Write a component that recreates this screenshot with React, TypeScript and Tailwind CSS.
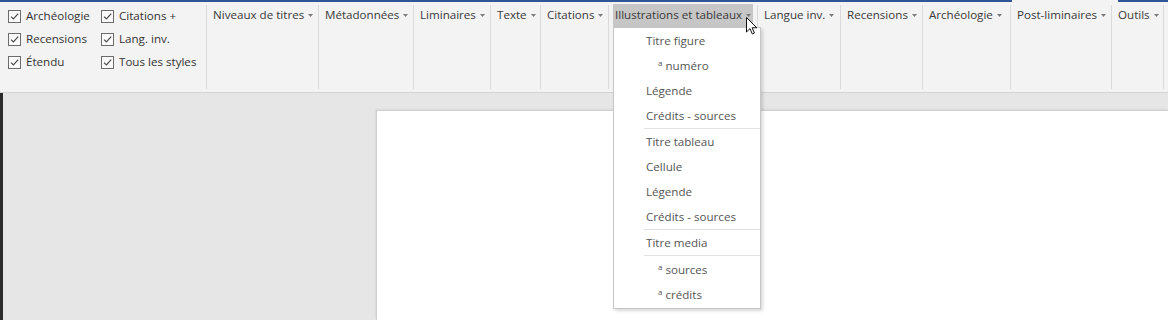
import type { ReactNode } from "react";

const font = "font-['Open_Sans','Noto_Sans',sans-serif]";

type Group = { label: string; w: string; open?: boolean };

const groups: Group[] = [
  { label: "Niveaux de titres", w: "w-[112px]" },
  { label: "Métadonnées", w: "w-[95px]" },
  { label: "Liminaires", w: "w-[77px]" },
  { label: "Texte", w: "w-[50px]" },
  { label: "Citations", w: "w-[68px]" },
  { label: "Illustrations et tableaux", w: "w-[149px]", open: true },
  { label: "Langue inv.", w: "w-[83px]" },
  { label: "Recensions", w: "w-[82px]" },
  { label: "Archéologie", w: "w-[88px]" },
  { label: "Post-liminaires", w: "w-[101px]" },
  { label: "Outils", w: "w-[52px]" },
];

const checks = [
  ["Archéologie", "Citations +"],
  ["Recensions", "Lang. inv."],
  ["Étendu", "Tous les styles"],
];

function Caret() {
  return (
    <svg width="5" height="3" viewBox="0 0 5 3" className="ml-[4px] mt-[2px] shrink-0">
      <polygon points="0,0 5,0 2.5,3" fill="#7a7a7a" />
    </svg>
  );
}

function Check({ label }: { label: string }) {
  return (
    <div className="flex h-[23px] items-center gap-[5px] whitespace-nowrap pb-[1px]">
      <span className="flex h-[13px] w-[13px] shrink-0 items-center justify-center border border-[#6b6b6b] bg-[#fbfbfb]">
        <svg width="11" height="11" viewBox="0 0 11 11">
          <path d="M2 5.6 L4.4 8 L9.2 2.6" fill="none" stroke="#4a4a4a" strokeWidth="1.2" />
        </svg>
      </span>
      <span className="text-[11.6px] text-[#333]">{label}</span>
    </div>
  );
}

function Item({ children, sub }: { children: ReactNode; sub?: boolean }) {
  return (
    <div
      className={`flex h-[25px] items-center whitespace-nowrap text-[11.6px] text-[#555] ${
        sub ? "pl-[44px]" : "pl-[32px]"
      }`}
    >
      {sub && <span className="mr-[3px] -mt-[5px] text-[8px]">a</span>}
      {children}
    </div>
  );
}

function Sep() {
  return <div className="ml-[30px] h-px bg-[#e2e2e2]" />;
}

export default function App() {
  return (
    <div className={`relative h-[320px] w-[1168px] overflow-hidden bg-[#e6e6e6] ${font}`}>
      <div className="flex h-[2px]">
        <div className="w-[1012px] bg-[#2f5597]" />
        <div className="w-[106px] bg-[#f3f3f3]" />
        <div className="flex-1 bg-[#2f5597]" />
      </div>

      <div className="flex h-[91px] border-b border-[#d4d4d4] bg-[#f3f3f3] py-[3px]">
        <div className="flex w-[207px] shrink-0 gap-[13px] border-r border-[#dadada] pl-[8px]">
          <div className="flex w-[80px] flex-col">
            {checks.map((r) => (
              <Check key={r[0]} label={r[0]} />
            ))}
          </div>
          <div className="flex flex-col">
            {checks.map((r) => (
              <Check key={r[1]} label={r[1]} />
            ))}
          </div>
        </div>
        {groups.map((g) => (
          <div key={g.label} className={`${g.w} flex shrink-0 items-start border-r border-[#dadada] pl-[4px]`}>
            <div
              className={`flex h-[23px] -mt-[1px] items-center whitespace-nowrap px-[2px] pb-[2px] text-[11.6px] text-[#3a3a3a] ${
                g.open ? "bg-[#c6c6c6]" : ""
              }`}
            >
              {g.label}
              <Caret />
            </div>
          </div>
        ))}
        <div className="flex-1" />
      </div>

      <div className="flex h-[227px]">
        <div className="w-[3px] bg-[#2b2b2b]" />
        <div className="flex-1 pl-[373px] pt-[17px]">
          <div className="h-full border-l border-t border-[#cfcfcf] bg-white shadow-[-1px_-1px_2px_rgba(0,0,0,0.06)]" />
        </div>
      </div>

      <div className="absolute left-[613px] top-[27px] w-[148px] border border-[#c6c6c6] bg-white pb-[1px] shadow-[2px_2px_3px_rgba(0,0,0,0.15)]">
        <Item>Titre figure</Item>
        <Item sub>numéro</Item>
        <Item>Légende</Item>
        <Item>Crédits - sources</Item>
        <Sep />
        <Item>Titre tableau</Item>
        <Item>Cellule</Item>
        <Item>Légende</Item>
        <Item>Crédits - sources</Item>
        <Sep />
        <Item>Titre media</Item>
        <Sep />
        <div className="pt-[1px]">
          <Item sub>sources</Item>
          <Item sub>crédits</Item>
        </div>
      </div>

      <svg className="absolute left-[746px] top-[17px]" width="12" height="19" viewBox="0 0 12 19">
        <path
          d="M0.5 0.5 L0.5 15 L4 11.6 L6.3 17 L8.4 16.1 L6.1 10.8 L10.8 10.8 Z"
          fill="#fff"
          stroke="#111"
          strokeWidth="1"
          strokeLinejoin="round"
        />
      </svg>
    </div>
  );
}
